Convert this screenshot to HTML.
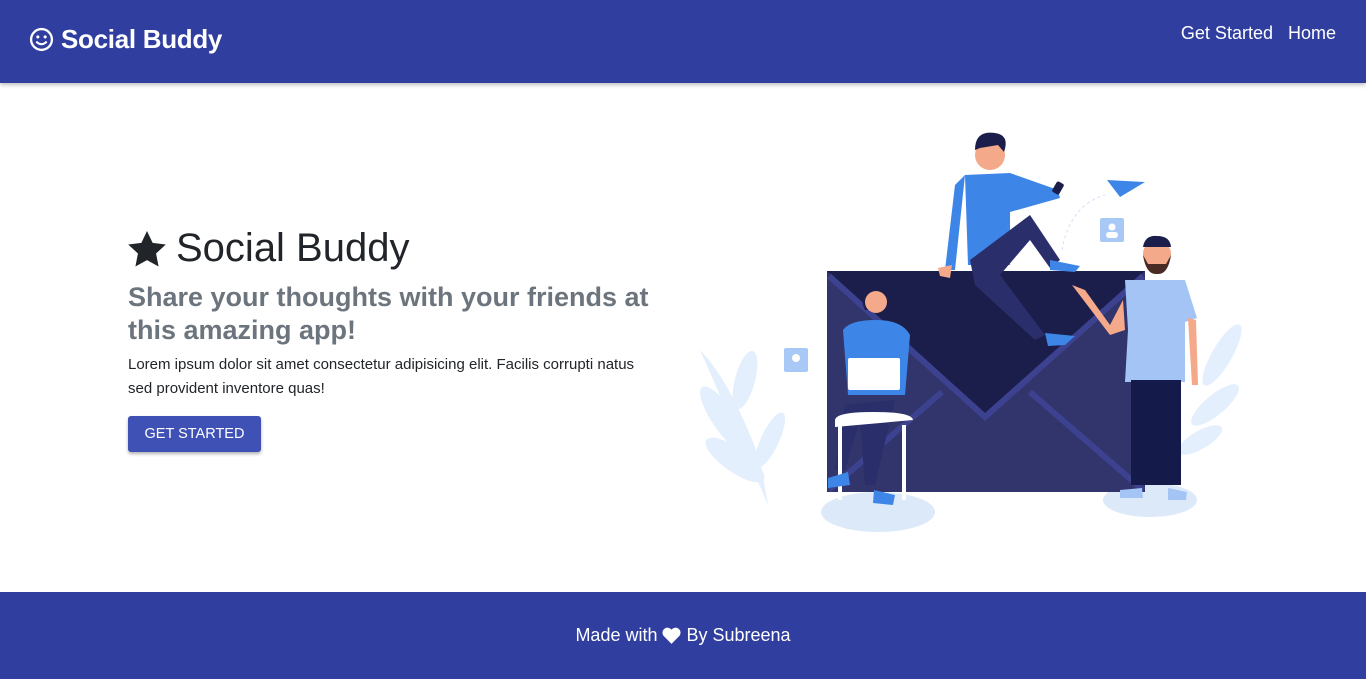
<!DOCTYPE html>
<html><head><meta charset="utf-8"><style>
*{margin:0;padding:0;box-sizing:border-box}
body{width:1366px;height:679px;overflow:hidden;font-family:"Liberation Sans",sans-serif;background:#fff;position:relative}
header{position:absolute;left:0;top:0;width:1366px;height:83px;background:#303f9f;box-shadow:0 2px 4px rgba(0,0,0,.25);color:#fff}
.logo{position:absolute;left:29px;top:24px;font-size:26px;font-weight:bold;display:flex;align-items:center;gap:7px;letter-spacing:-0.3px}
nav{position:absolute;right:30px;top:23px;font-size:18px}
nav span{margin-left:15px}
h1{position:absolute;left:128px;top:226px;font-size:40px;font-weight:normal;color:#212529;display:flex;align-items:center;gap:10px}
h2{position:absolute;left:128px;top:281px;width:540px;font-size:27px;line-height:33px;color:#6c757d;font-weight:bold}
p{position:absolute;left:128px;top:353px;width:525px;font-size:15px;line-height:24px;color:#212529}
.btn{position:absolute;left:128px;top:416px;width:133px;height:36px;background:#3f51b5;color:#fff;font-size:14.5px;border-radius:3px;display:flex;align-items:center;justify-content:center;box-shadow:0 2px 3px rgba(0,0,0,.3)}
footer{position:absolute;left:0;top:592px;width:1366px;height:87px;background:#303f9f;color:#fff;font-size:18px;display:flex;align-items:center;justify-content:center}
svg.ill{position:absolute;left:0;top:0}
</style></head><body>
<header>
<div class="logo"><svg width="25" height="25" viewBox="0 0 24 24"><circle cx="12" cy="12" r="10" fill="none" stroke="#fff" stroke-width="2.2"/><circle cx="8.5" cy="9.5" r="1.5" fill="#fff"/><circle cx="15.5" cy="9.5" r="1.5" fill="#fff"/><path d="M7 14q5 5 10 0" fill="none" stroke="#fff" stroke-width="2"/></svg>Social Buddy</div>
<nav><span>Get Started</span><span>Home</span></nav>
</header>
<h1><svg width="38" height="36" viewBox="0 0 24 23"><path d="M12 0l3.6 7.6 8.4 1-6.2 5.8 1.6 8.3L12 18.6 4.6 22.7l1.6-8.3L0 8.6l8.4-1z" fill="#212529"/></svg>Social Buddy</h1>
<h2>Share your thoughts with your friends at this amazing app!</h2>
<p>Lorem ipsum dolor sit amet consectetur adipisicing elit. Facilis corrupti natus sed provident inventore quas!</p>
<div class="btn">GET STARTED</div>
<svg class="ill" width="1366" height="679">
<g fill="#e3effc">
<path d="M768 505 Q740 440 700 350 Q730 380 760 460Z"/>
<ellipse cx="725" cy="420" rx="12" ry="40" transform="rotate(-35 725 420)"/>
<ellipse cx="745" cy="380" rx="10" ry="30" transform="rotate(15 745 380)"/>
<ellipse cx="735" cy="460" rx="12" ry="35" transform="rotate(-55 735 460)"/>
<ellipse cx="770" cy="440" rx="9" ry="30" transform="rotate(25 770 440)"/>
<ellipse cx="1222" cy="355" rx="10" ry="35" transform="rotate(30 1222 355)"/>
<ellipse cx="1215" cy="405" rx="10" ry="30" transform="rotate(50 1215 405)"/>
<ellipse cx="1200" cy="440" rx="9" ry="25" transform="rotate(60 1200 440)"/>
</g>
<ellipse cx="878" cy="512" rx="57" ry="20" fill="#dce9f9"/>
<ellipse cx="1150" cy="500" rx="47" ry="17" fill="#dce9f9"/>
<rect x="827" y="271" width="318" height="221" fill="#32356b"/>
<path d="M827 271 L985 413 L1145 271Z" fill="#1b1d4a"/>
<path d="M829 276 L985 417 L1143 276" fill="none" stroke="#3c4290" stroke-width="6"/>
<path d="M829 490 L942 392 M1143 490 L1030 392" stroke="#3c4290" stroke-width="6"/>
<rect x="784" y="348" width="24" height="24" rx="2" fill="#a8c8f5"/>
<circle cx="796" cy="358" r="4" fill="#fff"/>
<rect x="1100" y="218" width="24" height="24" rx="2" fill="#a8c8f5"/>
<circle cx="1112" cy="227" r="3.5" fill="#fff"/><rect x="1106" y="232" width="12" height="6" rx="3" fill="#fff"/>
<path d="M1062 250 Q1070 205 1105 195" fill="none" stroke="#cfe0f7" stroke-dasharray="3 3"/>
<path d="M1107 180 L1145 182 L1120 197Z" fill="#3d86e8"/>
<path d="M965 175 L1010 173 L1058 190 L1060 198 L1010 212 L1010 265 L968 265Z" fill="#3d86e8"/>
<path d="M955 185 L965 175 L955 270 L945 270Z" fill="#3d86e8"/>
<path d="M970 260 L1030 215 L1060 260 L1050 268 L1030 240 L1000 275 L1045 335 L1035 340 L975 285Z" fill="#2a2f6b"/>
<path d="M1050 260 L1080 266 L1075 272 L1050 270Z" fill="#3d86e8"/>
<path d="M1045 333 L1075 336 L1065 345 L1048 346Z" fill="#3d86e8"/>
<circle cx="990" cy="155" r="15" fill="#f3a98a"/>
<path d="M975 150 Q975 130 995 133 Q1010 135 1004 152 L998 145 L980 148Z" fill="#1b1d4a"/>
<rect x="1054" y="182" width="8" height="12" rx="2" fill="#1b1d4a" transform="rotate(30 1058 188)"/>
<path d="M938 268 L952 265 L950 278 L940 276Z" fill="#f3a98a"/>
<path d="M863 305 Q860 283 876 283 Q892 283 890 305 L888 310 L865 310Z" fill="#1b1d4a"/>
<circle cx="876" cy="302" r="11" fill="#f3a98a"/>
<path d="M843 330 Q850 320 876 320 Q902 320 910 335 L905 395 L848 395Z" fill="#3d86e8"/>
<path d="M845 405 L895 400 L875 485 L865 485 L860 420 L845 470 L835 470Z" fill="#2a2f6b"/>
<rect x="848" y="358" width="52" height="32" rx="2" fill="#fff"/>
<path d="M835 420 Q836 412 873 412 Q912 412 913 420 L835 427Z" fill="#fff"/>
<rect x="838" y="425" width="4" height="75" fill="#fff"/><rect x="902" y="425" width="4" height="75" fill="#fff"/>
<path d="M828 478 L848 472 L850 485 L828 488Z" fill="#3d86e8"/>
<path d="M874 490 L895 495 L893 505 L873 503Z" fill="#3d86e8"/>
<path d="M1125 280 L1185 280 L1197 318 L1185 322 L1185 382 L1125 382 L1128 330Z" fill="#a3c4f4"/>
<path d="M1072 285 L1085 290 L1110 325 L1123 300 L1125 330 L1110 335 Z" fill="#f3a98a"/>
<path d="M1188 318 L1196 320 L1198 385 L1192 385Z" fill="#f3a98a"/>
<rect x="1131" y="380" width="50" height="105" fill="#141a4a"/>
<circle cx="1157" cy="254" r="14" fill="#f3a98a"/>
<path d="M1143 247 Q1145 235 1157 236 Q1170 236 1171 247Z" fill="#1b1d4a"/>
<path d="M1143 255 Q1146 275 1157 274 Q1168 275 1171 255 L1166 264 L1148 264Z" fill="#4a2a25"/>
<path d="M1120 490 L1142 488 L1143 498 L1120 498Z" fill="#a3c4f4"/>
<path d="M1168 488 L1187 492 L1186 500 L1168 500Z" fill="#a3c4f4"/>
</svg>
<footer>Made with&nbsp;<svg width="19" height="17" viewBox="0 0 24 21"><path d="M12 21L2 11A6 6 0 0112 3a6 6 0 0110 8z" fill="#fff"/></svg>&nbsp;By Subreena</footer>
</body></html>
